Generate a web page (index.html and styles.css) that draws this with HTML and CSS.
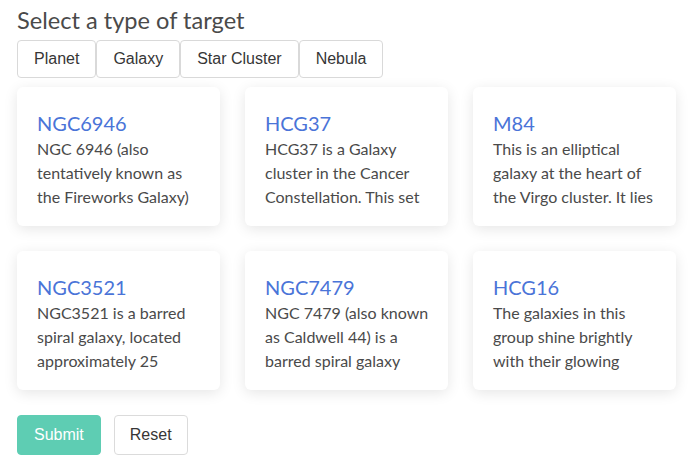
FILE: index.html
```html
<!DOCTYPE html>
<html>
<head>
<meta charset="utf-8">
<link rel="stylesheet" href="styles.css">
</head>
<body>
<div class="page">
  <h1 class="title">Select a type of target</h1>
  <div class="types">
    <button class="type-btn">Planet</button>
    <button class="type-btn">Galaxy</button>
    <button class="type-btn">Star Cluster</button>
    <button class="type-btn">Nebula</button>
  </div>
  <div class="grid">
    <div class="card">
      <div class="card-title">NGC6946</div>
      <div class="card-text">NGC 6946 (also tentatively known as the Fireworks Galaxy)</div>
    </div>
    <div class="card">
      <div class="card-title">HCG37</div>
      <div class="card-text">HCG37 is a Galaxy cluster in the Cancer Constellation. This set</div>
    </div>
    <div class="card">
      <div class="card-title">M84</div>
      <div class="card-text">This is an elliptical galaxy at the heart of the Virgo cluster. It lies</div>
    </div>
    <div class="card">
      <div class="card-title">NGC3521</div>
      <div class="card-text">NGC3521 is a barred spiral galaxy, located approximately 25</div>
    </div>
    <div class="card">
      <div class="card-title">NGC7479</div>
      <div class="card-text">NGC 7479 (also known as Caldwell 44) is a barred spiral galaxy</div>
    </div>
    <div class="card">
      <div class="card-title">HCG16</div>
      <div class="card-text">The galaxies in this group shine brightly with their glowing</div>
    </div>
  </div>
  <div class="actions">
    <button class="btn btn-submit">Submit</button>
    <button class="btn btn-reset">Reset</button>
  </div>
</div>
</body>
</html>
```

FILE: styles.css
```css
html, body {
  margin: 0;
  padding: 0;
  background: #fff;
}
.page {
  padding: 6px 12px 0 17px;
  font-family: "Lato", "Liberation Sans", sans-serif;
  color: #4a4a4a;
}
.title {
  margin: 0;
  font-size: 23.6px;
  font-weight: 400;
  line-height: 29px;
  color: #4a4a4a;
}
.types {
  display: flex;
  gap: 0;
  margin-top: 5px;
}
.type-btn {
  height: 38px;
  padding: 0 16px;
  border: 1px solid #d9d9d9;
  border-radius: 4px;
  background: #fff;
  font-family: "Liberation Sans", Arial, sans-serif;
  font-size: 16px;
  color: #363636;
}
.grid {
  display: grid;
  grid-template-columns: repeat(3, 203px);
  column-gap: 25px;
  row-gap: 25px;
  margin-top: 9px;
}
.card {
  height: 139px;
  box-sizing: border-box;
  padding: 23px 16px 0 20px;
  background: #fff;
  border-radius: 6px;
  box-shadow: 0 3px 14px rgba(0, 0, 0, 0.1);
}
.card-title {
  font-size: 20px;
  line-height: 27px;
  color: #4a74d8;
}
.card-text {
  font-size: 16px;
  line-height: 24px;
  color: #4a4a4a;
}
.actions {
  display: flex;
  gap: 13px;
  margin-top: 25px;
}
.btn {
  height: 40px;
  padding: 0 15px;
  border-radius: 4px;
  font-family: "Liberation Sans", Arial, sans-serif;
  font-size: 16px;
}
.btn-submit {
  padding: 0 16px;
  background: #5ecdb3;
  border: 1px solid #5ecdb3;
  color: #fff;
}
.btn-reset {
  background: #fff;
  border: 1px solid #dbdbdb;
  color: #363636;
}
```
